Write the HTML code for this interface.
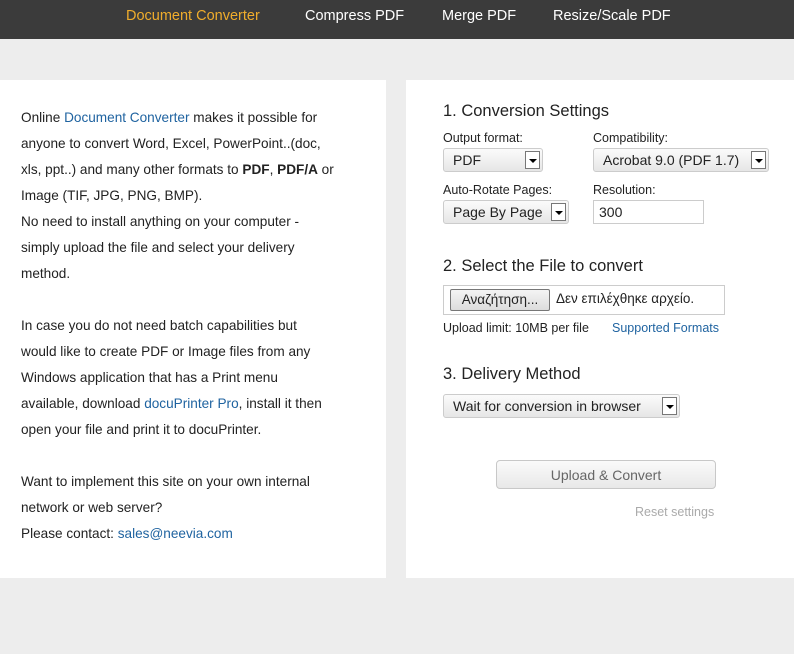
<!DOCTYPE html>
<html><head><meta charset="utf-8"><style>
*{margin:0;padding:0;box-sizing:border-box}
body{width:794px;height:654px;background:#ededed;font-family:"Liberation Sans",sans-serif;position:relative;overflow:hidden;color:#222}
.nav{position:absolute;left:0;top:0;width:794px;height:39px;background:#3b3b3b}
.nav span{position:absolute;top:8px;font-size:14.5px;color:#fff}
.p{position:absolute;top:80px;height:498px;background:#fff}
.lt{position:absolute;left:21px;top:105px;font-size:13.6px;line-height:26px;white-space:nowrap}
a{color:#1f63a0;text-decoration:none}
.a{position:absolute;font-size:12.5px;color:#222}
h{position:absolute;font-size:16.5px;color:#222}
.sel{position:absolute;height:24px;border:1px solid #ccc;border-radius:3px;background:linear-gradient(#fbfbfb,#e6e6e6);font-size:14px;padding:3px 0 0 9px;color:#222;white-space:nowrap}
.sel i{position:absolute;right:2px;top:2px;width:15px;height:18px;border:1px solid #777;background:#fff}
.sel i:after{content:"";position:absolute;left:3px;top:7px;border:4px solid transparent;border-top:4px solid #000}
.inp{position:absolute;border:1px solid #ccc;background:#fff;font-size:14px}
</style></head><body>
<div class="nav">
<span style="left:126px;color:#f0ad2c">Document Converter</span>
<span style="left:305px">Compress PDF</span>
<span style="left:442px">Merge PDF</span>
<span style="left:553px">Resize/Scale PDF</span>
</div>
<div class="p" style="left:0;width:386px"></div>
<div class="p" style="left:406px;width:388px"></div>
<div class="lt">Online <a>Document Converter</a> makes it possible for<br>anyone to convert Word, Excel, PowerPoint..(doc,<br>xls, ppt..) and many other formats to <b>PDF</b>, <b>PDF/A</b> or<br>Image (TIF, JPG, PNG, BMP).<br>No need to install anything on your computer -<br>simply upload the file and select your delivery<br>method.<br><br>In case you do not need batch capabilities but<br>would like to create PDF or Image files from any<br>Windows application that has a Print menu<br>available, download <a>docuPrinter Pro</a>, install it then<br>open your file and print it to docuPrinter.<br><br>Want to implement this site on your own internal<br>network or web server?<br>Please contact: <a>sales@neevia.com</a></div>
<h style="left:443px;top:102px">1. Conversion Settings</h>
<div class="a" style="left:443px;top:131px">Output format:</div>
<div class="a" style="left:593px;top:131px">Compatibility:</div>
<div class="sel" style="left:443px;top:148px;width:100px">PDF<i></i></div>
<div class="sel" style="left:593px;top:148px;width:176px">Acrobat 9.0 (PDF 1.7)<i></i></div>
<div class="a" style="left:443px;top:183px">Auto-Rotate Pages:</div>
<div class="a" style="left:593px;top:183px">Resolution:</div>
<div class="sel" style="left:443px;top:200px;width:126px">Page By Page<i></i></div>
<div class="inp" style="left:593px;top:200px;width:111px;height:24px;padding:3px 5px">300</div>
<h style="left:443px;top:257px">2. Select the File to convert</h>
<div class="inp" style="left:443px;top:285px;width:282px;height:30px"></div>
<div style="position:absolute;left:450px;top:289px;width:100px;height:22px;border:1px solid #777;border-radius:2px;background:linear-gradient(#f4f4f4,#dcdcdc);font-size:13.5px;text-align:center;padding-top:2px">Αναζήτηση...</div>
<div class="a" style="left:556px;top:291px;font-size:13.5px">Δεν επιλέχθηκε αρχείο.</div>
<div class="a" style="left:443px;top:321px">Upload limit: 10MB per file</div>
<div class="a" style="left:612px;top:321px"><a>Supported Formats</a></div>
<h style="left:443px;top:365px">3. Delivery Method</h>
<div class="sel" style="left:443px;top:394px;width:237px">Wait for conversion in browser<i></i></div>
<div style="position:absolute;left:496px;top:460px;width:220px;height:29px;border:1px solid #c8c8c8;border-radius:4px;background:linear-gradient(#fafafa,#e8e8e8);font-size:14px;color:#666;text-align:center;padding-top:6px">Upload &amp; Convert</div>
<div class="a" style="left:635px;top:505px;color:#aaa">Reset settings</div>
</body></html>
